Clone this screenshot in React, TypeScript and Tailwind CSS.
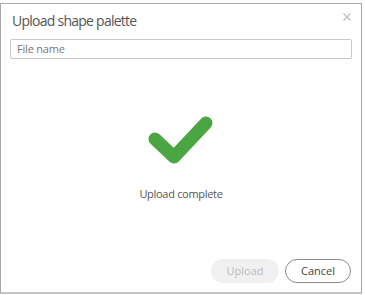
import React from "react";

export default function App() {
  return (
    <div
      className="relative w-[365px] h-[295px] bg-white overflow-hidden"
      style={{ fontFamily: "'Open Sans', 'Noto Sans', sans-serif" }}
    >
      <div className="absolute left-[0px] top-[3px] w-[362px] h-[291px] border border-[#a8a8a8] border-b-2 border-b-[#c4c4c4] bg-white flex flex-col">
        <div className="flex items-start justify-between pl-[11px] pr-[10px] pt-[6px]">
          <div className="text-[14px] leading-[22px] tracking-[-0.75px] text-[#555555]">Upload shape palette</div>
          <svg width="8" height="8" viewBox="0 0 8 8" className="mt-[3px]">
            <path d="M0.5 0.5 L7.5 7.5 M7.5 0.5 L0.5 7.5" stroke="#bdbdbd" strokeWidth="1.1" />
          </svg>
        </div>
        <div className="px-[9px] mt-[7px]">
          <div className="h-[20px] border border-[#c8c8c8] rounded-[2px] flex items-center pl-[6px] text-[11px] tracking-[-0.2px] text-[#777777]">
            File name
          </div>
        </div>
        <div className="flex flex-col items-center mt-[56px]">
          <svg width="66" height="52" viewBox="0 0 66 52">
            <path
              d="M7 24 L26 42 L58 8"
              fill="none"
              stroke="#4ca543"
              strokeWidth="13"
              strokeLinecap="round"
              strokeLinejoin="round"
            />
          </svg>
          <div className="mt-[19px] text-[11px] tracking-[-0.3px] text-[#555555]">Upload complete</div>
        </div>
        <div className="flex-1" />
        <div className="flex justify-end gap-[6px] pr-[10px] pb-[9px]">
          <button className="w-[68px] h-[24px] rounded-full bg-[#f0f0f0] text-[11px] text-[#bbbbbb]">
            Upload
          </button>
          <button className="w-[66px] h-[24px] rounded-full border border-[#8a8a8a] bg-white text-[11px] text-[#444444]">
            Cancel
          </button>
        </div>
      </div>
    </div>
  );
}
